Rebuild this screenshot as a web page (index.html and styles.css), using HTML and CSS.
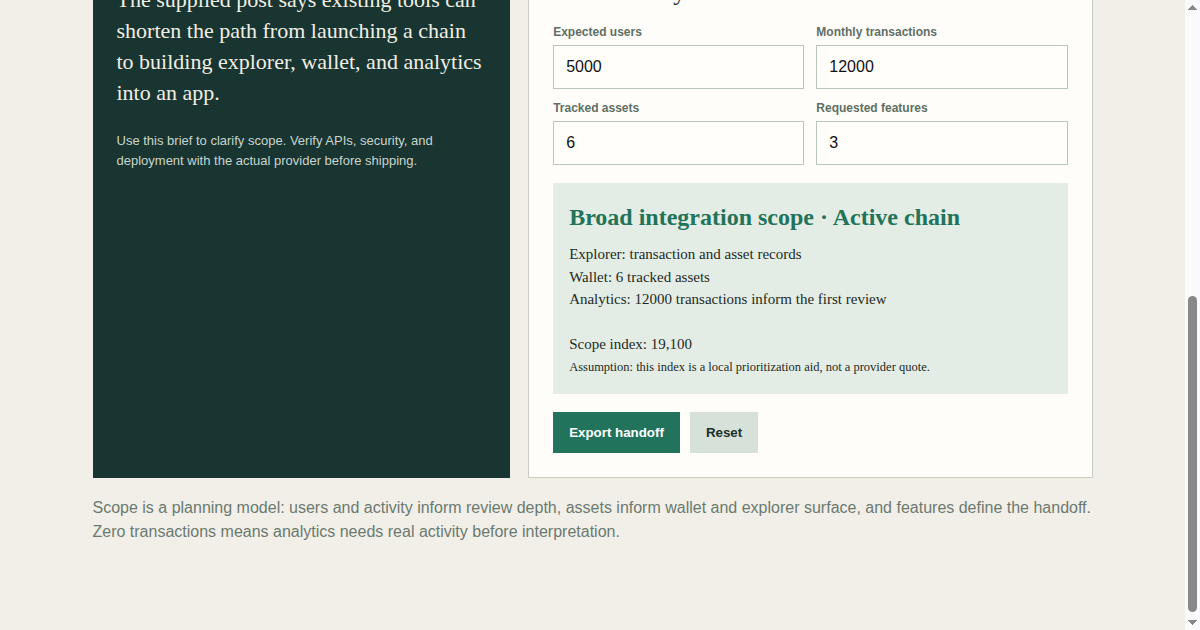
FILE: index.html
```html
<!DOCTYPE html>
<html lang="en">
  <head>
    <meta charset="UTF-8" />
    <meta name="viewport" content="width=device-width, initial-scale=1.0" />
    <title>Chain integration brief</title>
    <link rel="stylesheet" href="styles.css">
  </head>
  <body>
    <main class="page">
      <header class="masthead">
        <p class="brand">Chain launch notes</p>
        <h1>Scope explorer, wallet, and analytics for a new chain</h1>
        <p class="lede">
          A short planning brief: enter the expected activity on the chain and
          see which integration surface to prepare before asking a provider for
          a real estimate.
        </p>
        <ul class="tags">
          <li>Explorer</li>
          <li>Wallet</li>
          <li>Analytics</li>
        </ul>
      </header>

      <div class="layout">
        <section class="panel brief">
          <p class="kicker">From the source post</p>
          <p class="brief-quote">
            The supplied post says existing tools can shorten the path from
            launching a chain to building explorer, wallet, and analytics into
            an app.
          </p>
          <p class="brief-note">
            Use this brief to clarify scope. Verify APIs, security, and
            deployment with the actual provider before shipping.
          </p>
        </section>

        <section class="panel calc">
          <p class="kicker kicker-dark">Scope calculator</p>
          <h2>Plan delivery</h2>
          <div class="fields">
            <label class="field">
              <span>Expected users</span>
              <input type="number" value="5000" />
            </label>
            <label class="field">
              <span>Monthly transactions</span>
              <input type="number" value="12000" />
            </label>
            <label class="field">
              <span>Tracked assets</span>
              <input type="number" value="6" />
            </label>
            <label class="field">
              <span>Requested features</span>
              <input type="number" value="3" />
            </label>
          </div>

          <div class="result">
            <h3>Broad integration scope · Active chain</h3>
            <ul class="result-list">
              <li>Explorer: transaction and asset records</li>
              <li>Wallet: 6 tracked assets</li>
              <li>Analytics: 12000 transactions inform the first review</li>
            </ul>
            <p class="result-index">Scope index: 19,100</p>
            <p class="result-note">
              Assumption: this index is a local prioritization aid, not a
              provider quote.
            </p>
          </div>

          <div class="actions">
            <button class="btn btn-primary" type="button">Export handoff</button>
            <button class="btn btn-light" type="button">Reset</button>
          </div>
        </section>
      </div>

      <p class="footnote">
        Scope is a planning model: users and activity inform review depth,
        assets inform wallet and explorer surface, and features define the
        handoff. Zero transactions means analytics needs real activity before
        interpretation.
      </p>
    </main>

    <!-- browser scrollbar, drawn because the capture hides the real one -->
    <div class="scrollbar" aria-hidden="true">
      <span class="scroll-arrow scroll-up"></span>
      <span class="scroll-track"><span class="scroll-thumb"></span></span>
      <span class="scroll-arrow scroll-down"></span>
    </div>

    <script>
      // start at the calculator, like the reference view
      window.scrollTo(0, document.documentElement.scrollHeight);
      window.addEventListener("load", function () {
        window.scrollTo(0, document.documentElement.scrollHeight);
      });
    </script>
  </body>
</html>
```

FILE: styles.css
```css
body {
  margin: 0 15px 0 0;
  background: #f2efe8;
  color: #1f2a26;
  font-family: "Liberation Sans", Arial, sans-serif;
}

/* scrollbar drawing */
.scrollbar {
  position: fixed;
  top: 0;
  right: 0;
  bottom: 0;
  display: flex;
  flex-direction: column;
  width: 15px;
  background: #fafafa;
}
.scroll-arrow {
  flex: none;
  height: 15px;
  background-repeat: no-repeat;
  background-size: 9px 5px;
  background-position: center;
}
.scroll-up {
  background-image: conic-gradient(from 135deg at 50% 0, #888 90deg, transparent 0);
}
.scroll-down {
  background-image: conic-gradient(from -45deg at 50% 100%, #888 90deg, transparent 0);
}
.scroll-track {
  flex: 1;
  display: flex;
  flex-direction: column;
  justify-content: flex-end;
  padding: 0 3px 3px;
}
.scroll-thumb {
  height: 316px;
  border-radius: 5px;
  background: #888;
}

.page {
  box-sizing: border-box;
  max-width: 1000px;
  margin: 0 auto;
  padding: 64px 0 86px;
}

/* header */
.masthead {
  margin-bottom: 56px;
}
.brand {
  margin: 0 0 72px;
  font-size: 13px;
  font-weight: bold;
  letter-spacing: 0.08em;
  text-transform: uppercase;
  color: #22735c;
}
.masthead h1 {
  max-width: 760px;
  margin: 0 0 18px;
  font-family: "Liberation Serif", "Times New Roman", serif;
  font-size: 50px;
  font-weight: normal;
  line-height: 1.1;
  color: #193531;
}
.lede {
  max-width: 680px;
  margin: 0 0 24px;
  font-size: 18px;
  line-height: 1.55;
  color: #4f5f56;
}
.tags {
  display: flex;
  gap: 8px;
  margin: 0;
  padding: 0;
  list-style: none;
}
.tags li {
  padding: 6px 12px;
  border: 1px solid #c9ccc1;
  font-size: 13px;
  color: #3d4d45;
}

/* two columns */
.layout {
  display: grid;
  grid-template-columns: 0.74fr 1fr;
  gap: 18px;
}
.panel {
  padding: 24px;
  border: 1px solid #c9ccc1;
}
.kicker {
  margin: 0 0 19px;
  font-size: 12px;
  line-height: 18px;
  font-weight: bold;
  letter-spacing: 0.08em;
  text-transform: uppercase;
  color: #9fc2b1;
}
.kicker-dark {
  margin-bottom: 10px;
  color: #22735c;
}

.brief {
  border: none;
  background: #193531;
  color: #f1eee4;
}
.brief-quote {
  margin: 0;
  font-family: "Liberation Serif", "Times New Roman", serif;
  font-size: 22px;
  line-height: 31px;
}
.brief-note {
  margin: 23px 0 0;
  font-size: 13px;
  line-height: 20px;
  color: #c9d4cc;
}

.calc {
  background: #fefdf9;
}
.calc h2 {
  margin: 0 0 18px;
  font-family: "Liberation Serif", "Times New Roman", serif;
  font-size: 25px;
  font-weight: normal;
  line-height: 31px;
  color: #1c2f2a;
}
.fields {
  display: grid;
  grid-template-columns: 1fr 1fr;
  gap: 12px;
}
.field {
  display: flex;
  flex-direction: column;
  gap: 6px;
}
.field span {
  font-size: 12px;
  line-height: 14px;
  font-weight: bold;
  color: #5f6f65;
}
.field input {
  box-sizing: border-box;
  width: 100%;
  height: 44px;
  padding: 0 12px;
  border: 1px solid #b9c6bc;
  border-radius: 0;
  background: #fffefb;
  font-family: "Liberation Sans", Arial, sans-serif;
  font-size: 16px;
  color: #111;
  appearance: textfield;
}

/* result */
.result {
  margin-top: 18px;
  padding: 21px 16px 18px;
  background: #e3ede5;
  font-family: "Liberation Serif", "Times New Roman", serif;
}
.result h3 {
  margin: 0 0 12px;
  font-size: 24px;
  line-height: 27.5px;
  color: #22735a;
}
.result-list {
  margin: 0;
  padding: 0;
  list-style: none;
  font-size: 15px;
  line-height: 22.5px;
}
.result-index {
  margin: 22.5px 0 0;
  font-size: 15px;
  line-height: 22.5px;
}
.result-note {
  margin: 2px 0 0;
  font-size: 12.5px;
  line-height: 18px;
}

.actions {
  display: flex;
  gap: 10px;
  margin-top: 18px;
}
.btn {
  padding: 12px 16px;
  border: none;
  border-radius: 0;
  font-family: "Liberation Sans", Arial, sans-serif;
  font-size: 13.333px;
  line-height: 17px;
  font-weight: bold;
  cursor: pointer;
}
.btn-primary {
  background: #22735c;
  color: #fff;
}
.btn-light {
  background: #d6e2d9;
  color: #1d3029;
}

.footnote {
  margin: 18px 0 0;
  font-size: 16px;
  line-height: 24px;
  color: #6b7a70;
}
```
